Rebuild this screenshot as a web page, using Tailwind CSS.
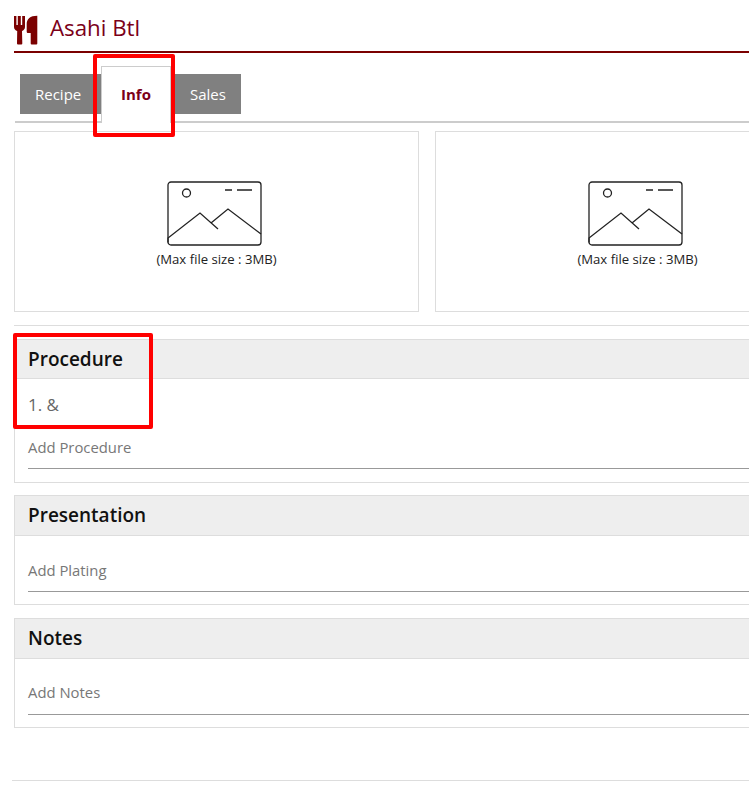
<!DOCTYPE html>
<html lang="en">
<head>
    <meta charset="UTF-8">
    <meta name="viewport" content="width=device-width, initial-scale=1.0">
    <title>Asahi Btl</title>
    <script src="https://cdn.jsdelivr.net/npm/@tailwindcss/browser@4"></script>
</head>
<body class="bg-white font-['Open_Sans',sans-serif] overflow-hidden">
    <div class="relative w-[749px] h-[788px] overflow-hidden">
        <!-- Title -->
        <div class="ml-[14px] w-[800px] h-[53px] border-b-2 border-[#7b0000] flex items-start pt-[13px]">
            <svg class="w-[24px] h-[32px] text-[#7b0000]" viewBox="0 0 24 32" fill="currentColor">
                <path d="M0 3h2.400v9h1.400V3h3v9h1.400V3H11v11c0 2-1.500 3.500-3 4l.3 12.500a1 1 0 0 1-1 1H4a1 1 0 0 1-1-1L3.200 18C1.500 17.500 0 16 0 14z"/>
                <path d="M12.700 11c0-5 3.300-8.300 10.600-8.300V30.500a1 1 0 0 1-1 1h-4.600a1 1 0 0 1-1-1V20h-2.500c-1 0-1.500-.5-1.500-1.500z"/>
            </svg>
            <h1 class="ml-[12px] text-[22.300px] leading-[30px] text-[#7b0019]">Asahi Btl</h1>
        </div>

        <!-- Tabs -->
        <div class="ml-[15px] w-[800px] h-[70px] border-b-2 border-[#ccc] flex items-end pl-[5px]">
            <button class="w-[81px] h-[40px] mb-[7px] bg-[#808080] text-white text-[15px] text-left pl-[15px]">Recipe</button>
            <button class="w-[70px] h-[57px] -mb-[2px] bg-white border border-b-0 border-[#ccc] text-[#7b0019] text-[15px] font-bold pb-[1px]">Info</button>
            <button class="w-[70px] h-[40px] mb-[7px] bg-[#808080] text-white text-[15px] text-left pl-[19px]">Sales</button>
        </div>

        <!-- Images -->
        <div class="ml-[14px] mt-[8px] flex gap-[16px] w-[900px]">
            <div class="w-[405px] h-[181px] border border-[#ddd] flex flex-col items-center pt-[49px]">
                <svg class="w-[95px] h-[65px] -ml-[5px] text-[#222]" viewBox="0 0 95 65" fill="none" stroke="currentColor" stroke-width="1.300">
                    <rect x="1" y="1" width="93" height="63" rx="3"/>
                    <circle cx="19.500" cy="12" r="4"/>
                    <path d="M58 9h7M70 9h15"/>
                    <path d="M1 61.500v-4.500l32-25 18 16M44 42l17-14 33 25"/>
                </svg>
                <p class="text-[13.150px] leading-[17px] text-[#222] mt-[5px]">(Max file size : 3MB)</p>
            </div>
            <div class="w-[405px] h-[181px] border border-[#ddd] flex flex-col items-center pt-[49px]">
                <svg class="w-[95px] h-[65px] -ml-[5px] text-[#222]" viewBox="0 0 95 65" fill="none" stroke="currentColor" stroke-width="1.300">
                    <rect x="1" y="1" width="93" height="63" rx="3"/>
                    <circle cx="19.500" cy="12" r="4"/>
                    <path d="M58 9h7M70 9h15"/>
                    <path d="M1 61.500v-4.500l32-25 18 16M44 42l17-14 33 25"/>
                </svg>
                <p class="text-[13.150px] leading-[17px] text-[#222] mt-[5px]">(Max file size : 3MB)</p>
            </div>
        </div>

        <div class="ml-[14px] mt-[13px] w-[800px] border-t border-[#ddd]"></div>

        <!-- Procedure -->
        <section class="ml-[14px] mt-[13px] w-[800px] h-[144px] border border-[#ddd]">
            <h2 class="h-[39px] bg-[#eee] border-b border-[#ddd] pl-[13px] text-[19px] leading-[38px] font-semibold text-[#111]">Procedure</h2>
            <p class="pl-[13px] mt-[14px] text-[17px] leading-[24px] text-[#666]">1. &amp;</p>
            <div class="mx-[13px] mt-[19px] h-[33px] border-b border-[#999] text-[14.850px] leading-[22px] text-[#777]">Add Procedure</div>
        </section>

        <!-- Presentation -->
        <section class="ml-[14px] mt-[12px] w-[800px] h-[110px] border border-[#ddd]">
            <h2 class="h-[40px] bg-[#eee] border-b border-[#ddd] pl-[13px] text-[19px] leading-[38px] font-semibold text-[#111]">Presentation</h2>
            <div class="mx-[13px] mt-[23px] h-[33px] border-b border-[#999] text-[14.850px] leading-[22px] text-[#777]">Add Plating</div>
        </section>

        <!-- Notes -->
        <section class="ml-[14px] mt-[13px] w-[800px] h-[110px] border border-[#ddd]">
            <h2 class="h-[40px] bg-[#eee] border-b border-[#ddd] pl-[13px] text-[19px] leading-[38px] font-semibold text-[#111]">Notes</h2>
            <div class="mx-[13px] mt-[22px] h-[34px] border-b border-[#999] text-[14.850px] leading-[22px] text-[#777]">Add Notes</div>
        </section>

        <div class="ml-[12px] mt-[52px] w-[800px] border-t border-[#ddd]"></div>

        <!-- Red annotation boxes -->
        <div class="absolute left-[93px] top-[54px] w-[82px] h-[83px] border-[4px] border-[#f00] rounded-[2px]"></div>
        <div class="absolute left-[13px] top-[333px] w-[140px] h-[96px] border-[4px] border-[#f00] rounded-[2px]"></div>
    </div>
</body>
</html>
